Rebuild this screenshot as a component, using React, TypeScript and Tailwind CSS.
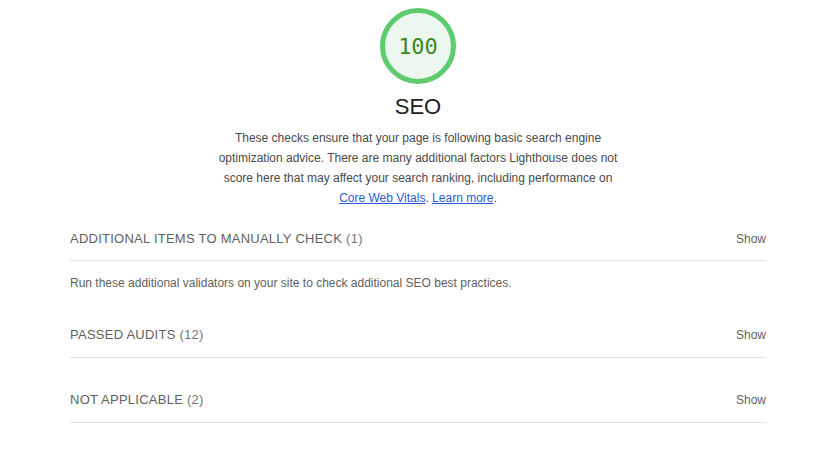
import React from "react";

const Row = ({ title, count, tall = false }: { title: string; count: string; tall?: boolean }) => (
  <div
    className={`flex items-center justify-between border-b border-[#e0e0e0] ${tall ? "h-[45px] pb-[1px]" : "h-[44px]"}`}
  >
    <div className="text-[13px] tracking-[0.25px] text-[#5f5f5f]">
      {title} <span className="text-[#757575]">({count})</span>
    </div>
    <div className="text-[12px] text-[#5f5f5f]">Show</div>
  </div>
);

export default function App() {
  return (
    <div
      className="w-[817px] h-[450px] bg-white overflow-hidden"
      style={{ fontFamily: '"Liberation Sans", Arial, sans-serif' }}
    >
      <div className="w-[836px]">
        <div className="flex flex-col items-center pt-[8px]">
          <div className="relative w-[76px] h-[76px]">
            <svg width="76" height="76" viewBox="0 0 120 120">
              <circle cx="60" cy="60" r="56" fill="#ecf8ef" stroke="#5ecb6e" strokeWidth="8" />
            </svg>
            <div
              className="absolute inset-0 flex items-center justify-center text-[22px] text-[#3a8a1c]"
              style={{ fontFamily: '"DejaVu Sans Mono", "Liberation Mono", monospace' }}
            >
              100
            </div>
          </div>
          <div className="mt-[9px] text-[22px] leading-[28px] text-[#212121]">SEO</div>
          <div className="mt-[7px] w-[404px] text-center text-[12px] leading-[20px] text-[#4a4a4a]">
            These checks ensure that your page is following basic search engine optimization advice. There are many
            additional factors Lighthouse does not score here that may affect your search ranking, including
            performance on <a className="text-[#2a5bd7] underline">Core Web Vitals</a>.{" "}
            <a className="text-[#2a5bd7] underline">Learn more</a>.
          </div>
        </div>
        <div className="mx-[70px] mt-[9px]">
          <Row title="ADDITIONAL ITEMS TO MANUALLY CHECK" count="1" />
          <div className="h-[44px] flex items-center text-[12px] text-[#5f5f5f]">
            Run these additional validators on your site to check additional SEO best practices.
          </div>
          <div className="mt-[8px]">
            <Row title="PASSED AUDITS" count="12" tall />
          </div>
          <div className="mt-[20px]">
            <Row title="NOT APPLICABLE" count="2" tall />
          </div>
        </div>
      </div>
    </div>
  );
}
